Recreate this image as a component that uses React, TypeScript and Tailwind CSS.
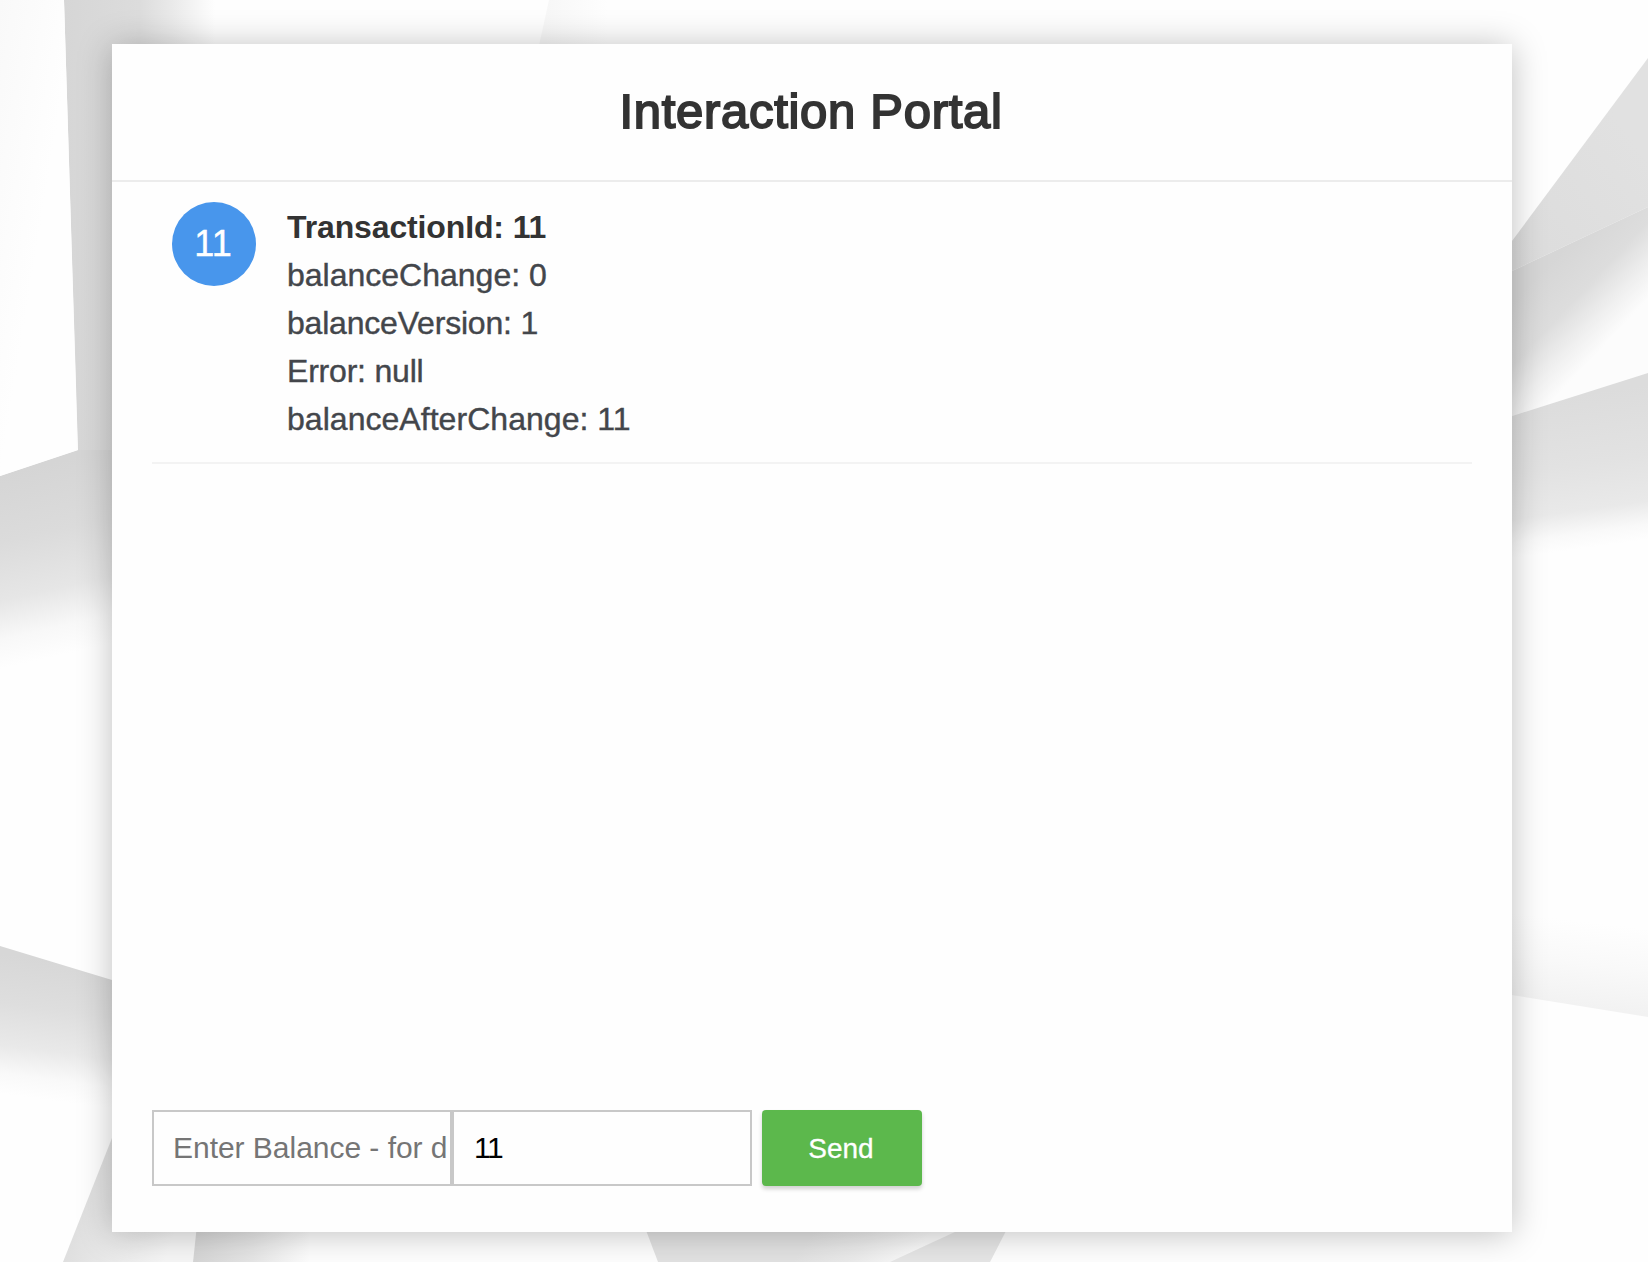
import React from "react";

const details = [
  { text: "balanceChange: 0", tracking: "" },
  { text: "balanceVersion: 1", tracking: "tracking-[-0.2px]" },
  { text: "Error: null", tracking: "tracking-[-0.2px]" },
  { text: "balanceAfterChange: 11", tracking: "tracking-[0.04px]" },
];

function Backdrop() {
  return (
    <svg className="absolute inset-0 h-full w-full" viewBox="0 0 1648 1262" preserveAspectRatio="none" aria-hidden="true">
      <defs>
        <linearGradient id="topBand" gradientUnits="userSpaceOnUse" x1="64" y1="0" x2="215" y2="0">
          <stop offset="0" stopColor="#d6d6d6" />
          <stop offset="0.5" stopColor="#dcdcdc" />
          <stop offset="0.72" stopColor="#eaeaea" />
          <stop offset="1" stopColor="#fefefe" />
        </linearGradient>
        <linearGradient id="leftFold" gradientUnits="userSpaceOnUse" x1="20" y1="470" x2="62" y2="655">
          <stop offset="0" stopColor="#d5d5d5" />
          <stop offset="0.35" stopColor="#dbdbdb" />
          <stop offset="0.65" stopColor="#e6e6e6" />
          <stop offset="0.85" stopColor="#f8f8f8" />
          <stop offset="1" stopColor="#fefefe" />
        </linearGradient>
        <linearGradient id="lowerFold" gradientUnits="userSpaceOnUse" x1="50" y1="960" x2="32" y2="1098">
          <stop offset="0" stopColor="#d7d7d7" />
          <stop offset="0.35" stopColor="#dedede" />
          <stop offset="0.65" stopColor="#e9e9e9" />
          <stop offset="0.85" stopColor="#f9f9f9" />
          <stop offset="1" stopColor="#fefefe" />
        </linearGradient>
        <linearGradient id="cornerWedge" gradientUnits="userSpaceOnUse" x1="75" y1="1230" x2="165" y2="1262">
          <stop offset="0" stopColor="#dfdfdf" />
          <stop offset="1" stopColor="#f6f6f6" />
        </linearGradient>
        <linearGradient id="bottomFade" gradientUnits="userSpaceOnUse" x1="195" y1="0" x2="310" y2="0">
          <stop offset="0" stopColor="#d6d6d6" />
          <stop offset="0.5" stopColor="#e6e6e6" />
          <stop offset="1" stopColor="#fefefe" />
        </linearGradient>
        <linearGradient id="bottomPetal" gradientUnits="userSpaceOnUse" x1="825" y1="1215" x2="905" y2="1270">
          <stop offset="0" stopColor="#e2e2e2" />
          <stop offset="0.5" stopColor="#ebebeb" />
          <stop offset="1" stopColor="#fafafa" />
        </linearGradient>
        <linearGradient id="rightWedge" gradientUnits="userSpaceOnUse" x1="1512" y1="260" x2="1648" y2="160">
          <stop offset="0" stopColor="#dcdcdc" />
          <stop offset="1" stopColor="#e1e1e1" />
        </linearGradient>
        <linearGradient id="rightFold" gradientUnits="userSpaceOnUse" x1="1545" y1="268" x2="1615" y2="334">
          <stop offset="0" stopColor="#d6d6d6" />
          <stop offset="0.45" stopColor="#dddddd" />
          <stop offset="0.75" stopColor="#efefef" />
          <stop offset="1" stopColor="#fcfcfc" />
        </linearGradient>
        <linearGradient id="rightLower" gradientUnits="userSpaceOnUse" x1="1580" y1="394" x2="1601" y2="546">
          <stop offset="0" stopColor="#dcdcdc" />
          <stop offset="0.45" stopColor="#e2e2e2" />
          <stop offset="0.75" stopColor="#e9e9e9" />
          <stop offset="0.9" stopColor="#f9f9f9" />
          <stop offset="1" stopColor="#fefefe" />
        </linearGradient>
        <linearGradient id="rightSoft" gradientUnits="userSpaceOnUse" x1="1590" y1="922" x2="1580" y2="1006">
          <stop offset="0" stopColor="#fefefe" />
          <stop offset="0.5" stopColor="#f9f9f9" />
          <stop offset="1" stopColor="#f2f2f2" />
        </linearGradient>
        <linearGradient id="topSoft" gradientUnits="userSpaceOnUse" x1="545" y1="0" x2="608" y2="0">
          <stop offset="0" stopColor="#f7f7f7" />
          <stop offset="1" stopColor="#fefefe" />
        </linearGradient>
        <linearGradient id="topLeftPaper" x1="0" y1="0" x2="1" y2="1">
          <stop offset="0" stopColor="#f9f9f9" />
          <stop offset="0.5" stopColor="#fefefe" />
        </linearGradient>
      </defs>
      <rect width="1648" height="1262" fill="#fefefe" />
      <path d="M64 0H230V460H78Z" fill="url(#topBand)" />
      <path d="M0 476L78 450H130V700H0Z" fill="url(#leftFold)" />
      <path d="M0 0H64L78 450L0 476Z" fill="url(#topLeftPaper)" />
      <path d="M0 946L112 980L130 985V1120H0Z" fill="url(#lowerFold)" />
      <path d="M112 1138L63 1262H193L197 1232V1138Z" fill="url(#cornerWedge)" />
      <path d="M197 1225L193 1262H320V1225Z" fill="url(#bottomFade)" />
      <path d="M644 1225L658 1262H990L1009 1225Z" fill="url(#bottomPetal)" />
      <path d="M970 1225L890 1262H990L1009 1225Z" fill="#e6e6e6" />
      <path d="M549 0L538 50H610V0Z" fill="url(#topSoft)" />
      <path d="M1648 58L1512 241V271L1648 207Z" fill="url(#rightWedge)" />
      <path d="M1512 271L1648 207V373L1512 416Z" fill="url(#rightFold)" />
      <path d="M1512 416L1648 373V580H1512Z" fill="url(#rightLower)" />
      <path d="M1512 910H1648V1017L1512 995Z" fill="url(#rightSoft)" />
    </svg>
  );
}

export default function App() {
  return (
    <div className="relative h-[1262px] w-full overflow-hidden pt-11 pl-28 font-['Liberation_Sans',Arial,sans-serif]">
      <Backdrop />
      <main className="relative flex h-[1188px] w-[1400px] flex-col bg-[#fefefe] shadow-[0_2px_32px_rgba(0,0,0,0.25)]">
        <header className="flex h-[138px] shrink-0 items-center justify-center border-b-2 border-[#ececec] pr-0.5 pb-0.5">
          <h1 className="text-[49px] leading-none tracking-[0.7px] text-[#333333] [-webkit-text-stroke:1.9px_#333333]">Interaction Portal</h1>
        </header>
        <ul className="mx-10 flex-1">
          <li className="flex h-[282px] gap-[31px] border-b-2 border-[#f3f3f3] pt-5 pl-5">
            <div className="flex size-[84px] shrink-0 items-center justify-center rounded-full bg-[#4896ec] pr-0.5 text-4xl text-white [-webkit-text-stroke:0.4px_white]">11</div>
            <div className="pt-px text-[32px] leading-[48px] text-[#43464b] [-webkit-text-stroke:0.4px_#43464b]">
              <p className="font-bold tracking-[-0.13px] text-[#333333] [-webkit-text-stroke:0px]">TransactionId: 11</p>
              {details.map((line) => (
                <p key={line.text} className={line.tracking}>{line.text}</p>
              ))}
            </div>
          </li>
        </ul>
        <form className="mx-10 mb-[46px] flex h-[76px] shrink-0" onSubmit={(e) => e.preventDefault()}>
          <input
            className="w-[300px] border-2 border-[#c8c8c8] pr-[3px] pb-0.5 pl-[19px] text-[30px] tracking-[-0.03px] text-black outline-none placeholder:text-[#757575]"
            placeholder="Enter Balance - for deposit"
          />
          <input className="w-[300px] border-2 border-[#c8c8c8] pb-0.5 pl-5 text-[30px] tracking-[-1.5px] text-black outline-none" defaultValue="11" />
          <button className="ml-2.5 w-40 rounded bg-[#5cb84c] pt-0.5 pr-0.5 text-[28px] text-white shadow-[0_3px_4px_rgba(0,0,0,0.18)] [-webkit-text-stroke:0.3px_white]">Send</button>
        </form>
      </main>
    </div>
  );
}
